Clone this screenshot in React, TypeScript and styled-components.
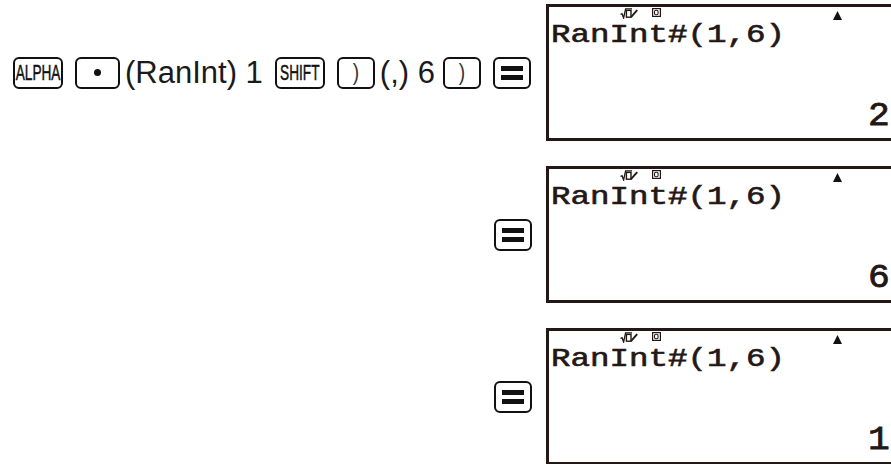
import * as React from 'react'
import styled, { createGlobalStyle } from 'styled-components'

const GlobalStyle = createGlobalStyle`
  html, body {
    margin: 0;
    padding: 0;
    background: #ffffff;
    overflow: hidden;
  }
`

const Page = styled.div`
  width: 891px;
  height: 464px;
  padding-top: 4px;
  box-sizing: border-box;
  display: grid;
  grid-template-columns: 532px 345px;
  column-gap: 14px;
  row-gap: 25px;
  overflow: hidden;
`

const Steps = styled.div<{ $start?: boolean }>`
  display: flex;
  align-items: center;
  justify-content: ${(p) => (p.$start ? 'flex-start' : 'flex-end')};
  padding-left: 13px;
`

const Key = styled.div<{ $w: number; $ml?: number }>`
  width: ${(p) => p.$w}px;
  height: 32px;
  margin-left: ${(p) => p.$ml ?? 0}px;
  box-sizing: border-box;
  border: 2.5px solid #111;
  border-radius: 6px;
  display: flex;
  align-items: center;
  justify-content: center;
  overflow: hidden;
  flex-shrink: 0;
`

const KeyLabel = styled.span`
  display: inline-block;
  font-family: 'Liberation Sans', Arial, sans-serif;
  font-size: 22px;
  line-height: 1;
  color: #111;
  -webkit-text-stroke: 0.5px #111;
  transform: scaleX(0.62);
  white-space: nowrap;
`

const Dot = styled.span`
  width: 7px;
  height: 7px;
  border-radius: 50%;
  background: #111;
`

const Paren = styled.span`
  font-family: 'Liberation Sans', Arial, sans-serif;
  font-size: 24px;
  font-weight: 300;
  color: #333;
  transform: scaleX(0.8);
  line-height: 1;
  margin-top: -2px;
`

const Equals = styled.span`
  width: 22px;
  height: 14px;
  border-top: 5px solid #111;
  border-bottom: 5px solid #111;
  box-sizing: border-box;
`

const Label = styled.span<{ $l: number; $r: number }>`
  font-family: 'Liberation Sans', Arial, sans-serif;
  font-size: 31px;
  color: #1a1a1a;
  line-height: 1;
  white-space: pre;
  margin-left: ${(p) => p.$l}px;
  margin-right: ${(p) => p.$r}px;
`

/* the LCD runs off the right edge of the page in the manual scan */
const Screen = styled.div`
  height: 137px;
  box-sizing: border-box;
  border: 3px solid #231815;
  border-right: none;
  display: flex;
  flex-direction: column;
  padding-left: 2px;
`

const StatusBar = styled.div`
  height: 13px;
  margin-top: 1px;
  display: flex;
  align-items: flex-start;
  padding-left: 69px;
`

const Expr = styled.div`
  font-family: 'Liberation Mono', 'Courier New', monospace;
  font-size: 25px;
  color: #231815;
  -webkit-text-stroke: 0.6px #231815;
  line-height: 1;
  margin-top: 2px;
  transform: scaleX(1.3);
  transform-origin: left center;
  white-space: pre;
`

const Result = styled.div`
  margin-top: auto;
  margin-bottom: 5px;
  align-self: flex-end;
  padding-right: 1px;
  font-family: 'Liberation Mono', 'Courier New', monospace;
  font-size: 33px;
  color: #231815;
  -webkit-text-stroke: 0.8px #231815;
  line-height: 1;
  transform: scaleX(1.1);
  transform-origin: right center;
`

const MathIcon = () => (
  <svg width="18" height="11" viewBox="0 0 18 11" style={{ display: 'block' }}>
    <path d="M0.5 6.5 L2 5.7 L3.6 10 L5.6 0.8 L12 0.8" fill="none" stroke="#231815" strokeWidth="1.3" />
    <rect x="6.4" y="2.4" width="4.6" height="6.8" fill="none" stroke="#231815" strokeWidth="1.4" />
    <path d="M11 9.2 L17.2 2.2" fill="none" stroke="#231815" strokeWidth="1.9" />
  </svg>
)

const DegIcon = () => (
  <svg width="9" height="9" viewBox="0 0 9 9" style={{ display: 'block', marginLeft: 14 }}>
    <rect x="0.6" y="0.6" width="7.8" height="7.8" fill="none" stroke="#231815" strokeWidth="1.2" />
    <rect x="2.5" y="2.3" width="3.6" height="4.4" rx="1.4" fill="none" stroke="#231815" strokeWidth="1.1" />
  </svg>
)

const UpArrow = () => (
  <svg width="9" height="9" viewBox="0 0 9 9" style={{ display: 'block', marginLeft: 172, marginTop: 3 }}>
    <path d="M4.5 0 L9 9 L0 9 Z" fill="#111" />
  </svg>
)

const CalcScreen = ({ result }: { result: string }) => (
  <Screen>
    <StatusBar>
      <MathIcon />
      <DegIcon />
      <UpArrow />
    </StatusBar>
    <Expr>RanInt#(1,6)</Expr>
    <Result>{result}</Result>
  </Screen>
)

const EqualsKey = ({ ml }: { ml?: number }) => (
  <Key $w={38} $ml={ml}>
    <Equals />
  </Key>
)

export default function App() {
  return (
    <>
      <GlobalStyle />
      <Page>
        <Steps $start>
          <Key $w={50}>
            <KeyLabel>ALPHA</KeyLabel>
          </Key>
          <Key $w={45} $ml={12}>
            <Dot />
          </Key>
          <Label $l={5} $r={12}>(RanInt) 1</Label>
          <Key $w={50}>
            <KeyLabel>SHIFT</KeyLabel>
          </Key>
          <Key $w={38} $ml={12}>
            <Paren>)</Paren>
          </Key>
          <Label $l={5} $r={8}>(,) 6</Label>
          <Key $w={38}>
            <Paren>)</Paren>
          </Key>
          <EqualsKey ml={12} />
        </Steps>
        <CalcScreen result="2" />

        <Steps>
          <EqualsKey />
        </Steps>
        <CalcScreen result="6" />

        <Steps>
          <EqualsKey />
        </Steps>
        <CalcScreen result="1" />
      </Page>
    </>
  )
}
